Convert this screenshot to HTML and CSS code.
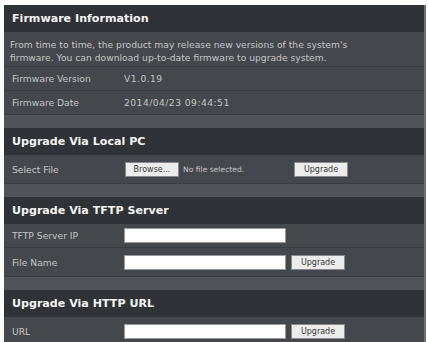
FILE: index.html
```html
<!DOCTYPE html>
<html>
<head>
<meta charset="utf-8">
<link rel="stylesheet" href="styles.css">
</head>
<body>
<div class="panel">
  <div class="head">Firmware Information</div>
  <div class="desc"><p class="desc-text">From time to time, the product may release new versions of the system's firmware. You can download up-to-date firmware to upgrade system.</p></div>
  <div class="row"><div class="label">Firmware Version</div><div class="value">V1.0.19</div></div>
  <div class="row"><div class="label">Firmware Date</div><div class="value">2014/04/23 09:44:51</div></div>
  <div class="gap"></div>
  <div class="head">Upgrade Via Local PC</div>
  <div class="row tall"><div class="label">Select File</div><div class="value"><span class="btn browse">Browse...</span><span class="nofile">No file selected.</span><span class="btn">Upgrade</span></div></div>
  <div class="gap"></div>
  <div class="head">Upgrade Via TFTP Server</div>
  <div class="row"><div class="label">TFTP Server IP</div><div class="value"><span class="input"></span></div></div>
  <div class="row tall"><div class="label">File Name</div><div class="value"><span class="input"></span><span class="btn">Upgrade</span></div></div>
  <div class="gap"></div>
  <div class="head">Upgrade Via HTTP URL</div>
  <div class="row tall"><div class="label">URL</div><div class="value"><span class="input"></span><span class="btn">Upgrade</span></div></div>
</div>
</body>
</html>
```
FILE: styles.css
```css
html, body { margin: 0; padding: 0; background: #ffffff; }
body { width: 428px; height: 342px; overflow: hidden; font-family: "DejaVu Sans", Verdana, sans-serif; }
.panel {
  margin: 5px 2px 0 4px;
  background: #44474b;
  border-right: 2px solid #6d7074;
  color: #c4c6c9;
  font-size: 9.2px;
}
.head {
  height: 27px;
  display: flex;
  align-items: center;
  padding-left: 8px;
  background: #2f3236;
  color: #f4f4f4;
  font-weight: bold;
  font-size: 11.1px;
}
.desc {
  padding: 6px 0 4px 6px;
  height: 24px;
  border-bottom: 1px solid #393c40;
}
.desc-text { margin: 0; width: 372px; line-height: 13px; }
.row {
  display: flex;
  align-items: center;
  height: 23px;
  border-bottom: 1px solid #393c40;
}
.row.tall { height: 28px; }
.label { width: 112px; padding-left: 8px; flex: none; }
.value { display: flex; align-items: center; letter-spacing: 0.45px; }
.gap { height: 13px; background: #505357; }
.btn {
  display: inline-block;
  width: 40px;
  height: 13px;
  line-height: 13px;
  padding: 0 6px;
  background: #ececec;
  border: 1px solid #8a8a8a;
  color: #3a3a3a;
  font-size: 8px;
  letter-spacing: 0;
  text-align: center;
}
.browse { margin-left: 1px; }
.nofile { margin-left: 4px; width: 111px; font-size: 7.6px; letter-spacing: 0; }
.input {
  display: inline-block;
  width: 162px;
  height: 15px;
  background: #ffffff;
  border: 1px solid #9a9a9a;
  box-sizing: border-box;
  margin-right: 5px;
}
```
